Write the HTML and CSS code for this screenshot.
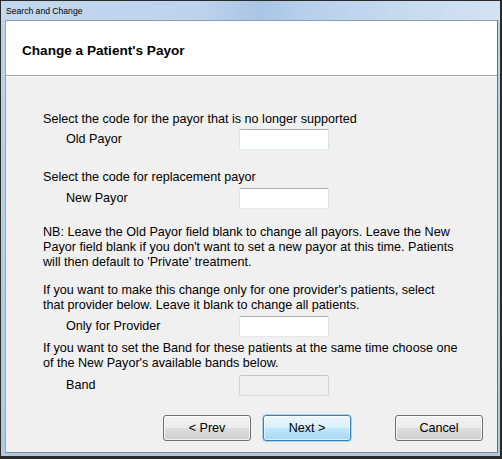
FILE: index.html
```html
<!DOCTYPE html>
<html>
<head>
<meta charset="utf-8">
<link rel="stylesheet" href="styles.css">
</head>
<body>
<div class="window">
  <div class="titlebar"><span class="title">Search and Change</span></div>
  <div class="client">
    <div class="header"><h1 class="heading">Change a Patient's Payor</h1></div>
    <div class="content">
      <p class="text t1">Select the code for the payor that is no longer supported</p>
      <div class="row r1"><span class="label">Old Payor</span><input class="field" type="text"></div>
      <p class="text t2">Select the code for replacement payor</p>
      <div class="row r2"><span class="label">New Payor</span><input class="field" type="text"></div>
      <p class="text t3">NB: Leave the Old Payor field blank to change all payors. Leave the New<br>Payor field blank if you don't want to set a new payor at this time. Patients<br>will then default to 'Private' treatment.</p>
      <p class="text t4">If you want to make this change only for one provider's patients, select<br>that provider below. Leave it blank to change all patients.</p>
      <div class="row r3"><span class="label">Only for Provider</span><input class="field" type="text"></div>
      <p class="text t5">If you want to set the Band for these patients at the same time choose one<br>of the New Payor's available bands below.</p>
      <div class="row r4"><span class="label">Band</span><input class="field disabled" type="text" disabled></div>
      <div class="buttons">
        <button class="btn prev">&lt; Prev</button>
        <button class="btn default next">Next &gt;</button>
        <button class="btn cancel">Cancel</button>
      </div>
    </div>
  </div>
</div>
</body>
</html>
```

FILE: styles.css
```css
html, body {
  margin: 0;
  padding: 0;
  background: #1e1e1e;
}
.window {
  width: 502px;
  height: 459px;
  box-sizing: border-box;
  border-style: solid;
  border-color: #2b2b2b;
  border-width: 1px 2px 3px 1px;
  padding: 0 2px 3px 4px;
  display: flex;
  flex-direction: column;
  background: linear-gradient(to bottom, #bcd3ec 0%, #aec8e6 100%);
}
.titlebar {
  height: 19px;
  flex: none;
  margin: 0 -2px 0 -4px;
  padding-left: 5px;
  display: flex;
  align-items: center;
  background: linear-gradient(to right, #c3d8ee 0%, #bdd3ec 40%, #a9c5e3 52%, #b6cfea 60%, #c6daef 80%, #d2e2f3 100%);
}
.title {
  font-family: "Liberation Sans", Arial, sans-serif;
  font-size: 8.6px;
  color: #000;
  position: relative;
  top: 0.5px;
}
.client {
  flex: 1;
  box-sizing: border-box;
  border-style: solid;
  border-width: 1px;
  border-color: #8b9bb0 #6e6e6e #8a8a8a #98a8bb;
  background: #f0f0f0;
  display: flex;
  flex-direction: column;
}
.header {
  height: 54px;
  background: #fff;
  border-bottom: 1px solid #a0a0a0;
  box-shadow: 0 1px 0 #ffffff;
  box-sizing: content-box;
}
.heading {
  margin: 0;
  padding: 22px 0 0 16px;
  font-family: "Liberation Sans", Arial, sans-serif;
  font-size: 13.6px;
  line-height: 16px;
  font-weight: bold;
  color: #000;
}
.content {
  padding: 36px 0 0 37px;
  display: flex;
  flex-direction: column;
  font-family: "Liberation Sans", Arial, sans-serif;
  font-size: 12.6px;
  color: #000;
}
.text {
  margin: 0;
  line-height: 15px;
  white-space: nowrap;
}
.t2 { margin-top: 20px; }
.t3 { margin-top: 16px; }
.t4 { margin-top: 13px; }
.t5 { margin-top: 4px; }
.row {
  display: flex;
  align-items: center;
  padding-left: 23px;
  margin-top: 3px;
}
.r1 { margin-top: 2px; }
.r4 { margin-top: 4px; }
.label {
  width: 173px;
  line-height: 15px;
}
.field {
  width: 90px;
  height: 21px;
  box-sizing: border-box;
  margin: 0;
  padding: 0 3px;
  border: 1px solid;
  border-color: #abadb3 #dbdfe6 #e3e9ef #e2e3ea;
  border-radius: 2px;
  background: #fff;
  font: inherit;
  outline: none;
}
.field.disabled {
  background: #f0f0f0;
  border-color: #c4c4c4 #d2d2d2 #d8d8d8 #d2d2d2;
}
.buttons {
  display: flex;
  margin-top: 19px;
  padding-left: 120px;
}
.btn {
  width: 88px;
  height: 26px;
  box-sizing: border-box;
  margin: 0;
  padding: 0;
  border: 1px solid #707070;
  border-radius: 3px;
  background: linear-gradient(to bottom, #f2f2f2 0%, #ebebeb 48%, #dddddd 52%, #cfcfcf 100%);
  box-shadow: inset 0 0 0 1px rgba(255,255,255,0.75);
  font-family: "Liberation Sans", Arial, sans-serif;
  font-size: 12.6px;
  color: #000;
}
.btn.default {
  border-color: #3c7fb1;
  background: linear-gradient(to bottom, #eaf6fd 0%, #d9f0fc 48%, #bee6fd 52%, #a7d9f5 100%);
  box-shadow: inset 0 0 0 1px rgba(255,255,255,0.6), 0 0 0 0.5px #5fb7e6;
}
.next { margin-left: 12px; }
.cancel { margin-left: 44px; }
```
